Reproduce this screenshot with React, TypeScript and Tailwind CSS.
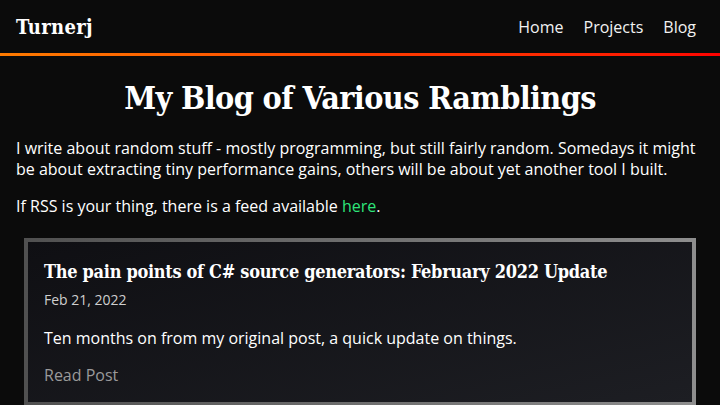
const SLAB = "font-['DejaVu_Serif',serif] [font-stretch:condensed]";

function Header() {
  return (
    <header className="bg-[#0b0b0b]">
      <div className="flex h-[53px] items-center justify-between pl-4 pr-6">
        <a className={`${SLAB} text-[20px] font-bold text-white tracking-[0.3px]`}>Turnerj</a>
        <nav className="flex items-center gap-5 text-[16px] text-[#f2f2f2]">
          <a>Home</a>
          <a>Projects</a>
          <a>Blog</a>
        </nav>
      </div>
      <div className="h-[3px] bg-gradient-to-r from-[#ff7b00] via-[#ff3d00] to-[#ff0000]" />
    </header>
  );
}

export default function App() {
  return (
    <div className="h-[405px] overflow-hidden bg-[#0b0b0b] text-white font-['Open_Sans',sans-serif]">
      <Header />
      <main className="px-4">
        <h1 className={`${SLAB} mt-[22px] text-center text-[32px] font-bold leading-[40px] tracking-[-0.6px]`}>
          My Blog of Various Ramblings
        </h1>
        <p className="mt-[20px] text-[16px] leading-[21px]">
          I write about random stuff - mostly programming, but still fairly random. Somedays it might be about extracting tiny performance gains, others will be about yet another tool I built.
        </p>
        <p className="mt-[16px] text-[16px] leading-[21px]">
          If RSS is your thing, there is a feed available <a className="text-[#2ee57a]">here</a>.
        </p>
        <div className="mx-2 mt-[21px] bg-gradient-to-r from-[#505050] to-[#8e8e8e] p-1">
          <article className="bg-gradient-to-br from-[#0f0f13] to-[#1d1e23] px-4 pt-[17px] pb-4">
            <h2 className={`${SLAB} whitespace-nowrap text-[18px] font-bold leading-[26px] tracking-[-0.3px]`}>
              The pain points of C# source generators: February 2022 Update
            </h2>
            <div className="mt-[5px] text-[14px] leading-[20px] text-[#cfcfcf]">Feb 21, 2022</div>
            <p className="mt-[17px] text-[16px] leading-[22px]">Ten months on from my original post, a quick update on things.</p>
            <a className="mt-[15px] block text-[16px] leading-[22px] text-[#9a9a9a]">Read Post</a>
          </article>
        </div>
      </main>
    </div>
  );
}
